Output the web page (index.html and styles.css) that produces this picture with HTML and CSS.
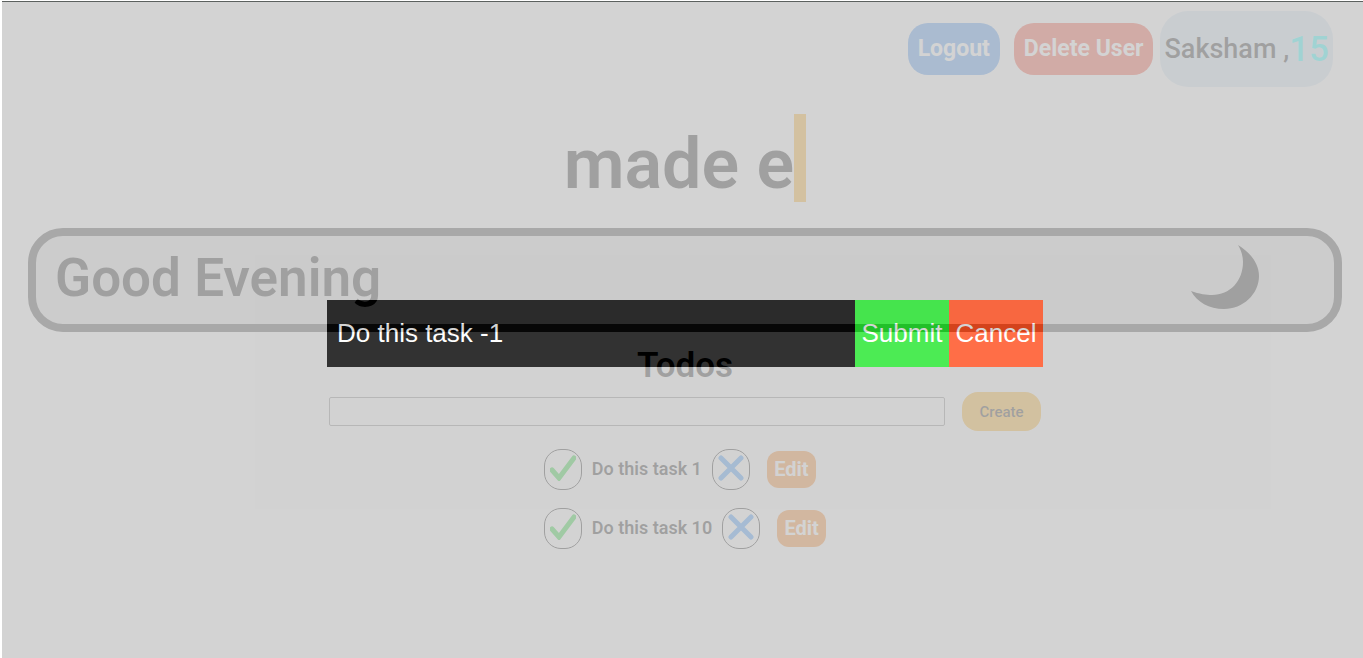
FILE: index.html
```
<!DOCTYPE html>
<html lang="en">
<head>
<meta charset="utf-8">
<title>Todos</title>
<link rel="stylesheet" href="styles.css">
</head>
<body>
<div class="app">
  <header class="topbar">
    <button class="btn logout" type="button">Logout</button>
    <button class="btn delete-user" type="button">Delete User</button>
    <div class="user">Saksham ,<span class="count">15</span></div>
  </header>
  <main>
    <div class="typing"><span class="typed">made e</span></div>
    <section class="greeting">
      <h1>Good Evening</h1>
      <svg class="moon" viewBox="0 0 70 66" aria-hidden="true"><path d="M48 0C61 8 69 19 69 31C69 49 53 64 34 64C19 64 7 57 1 46C9 49 17 50 22 50C40 50 53 36 53 17C53 11 51 5 48 0Z"/></svg>
    </section>
    <h2>Todos</h2>
    <form class="create-form">
      <input class="new-todo" type="text" aria-label="New todo">
      <button class="create" type="button">Create</button>
    </form>
    <ul class="todos">
      <li>
        <button class="icon-btn" type="button" aria-label="Complete"><svg class="check" viewBox="0 0 26 26"><path d="M2 15L9 23L24 3"/></svg></button>
        <span class="task">Do this task 1</span>
        <button class="icon-btn" type="button" aria-label="Remove"><svg class="cross" viewBox="0 0 26 26"><path d="M3 3L23 23M23 3L3 23"/></svg></button>
        <button class="edit" type="button">Edit</button>
      </li>
      <li>
        <button class="icon-btn" type="button" aria-label="Complete"><svg class="check" viewBox="0 0 26 26"><path d="M2 15L9 23L24 3"/></svg></button>
        <span class="task">Do this task 10</span>
        <button class="icon-btn" type="button" aria-label="Remove"><svg class="cross" viewBox="0 0 26 26"><path d="M3 3L23 23M23 3L3 23"/></svg></button>
        <button class="edit" type="button">Edit</button>
      </li>
    </ul>
  </main>
  <div class="overlay">
    <form class="edit-form">
      <input class="edit-input" type="text" aria-label="Edit todo" value="Do this task -1">
      <button class="submit" type="button">Submit</button>
      <button class="cancel" type="button">Cancel</button>
    </form>
  </div>
</div>
</body>
</html>
```
FILE: styles.css
```
* { box-sizing: border-box; }
body {
  margin: 0;
  padding: 1px 0 0 2px;
  background: #fff;
  color: #000;
  font-family: Roboto, "Liberation Sans", sans-serif;
  font-weight: 500;
}
button, input { margin: 0; border: 0; font: inherit; }
button { padding: 0; cursor: pointer; }
h1, h2, ul { margin: 0; padding: 0; font-weight: 600; }
.app {
  position: relative;
  min-height: calc(100vh - 1px);
  padding: 0 21px 0 26px;
  border-top: 1px solid #5c615f;
}
.topbar {
  display: flex;
  justify-content: flex-end;
  align-items: center;
  padding: 9px 9px 0 0;
}
.btn {
  height: 52px;
  padding: 0 10px 2px;
  border-radius: 20px;
  color: #fff;
  font-size: 23px;
  font-weight: 700;
}
.logout { margin-right: 14px; background: #3287f0; }
.delete-user { margin-right: 7px; background: #f5371e; }
.user {
  display: flex;
  align-items: center;
  height: 76px;
  padding: 0 4px;
  border-radius: 28px;
  background: #cde1f0;
  font-size: 27px;
}
.count { color: #00ffff; font-size: 35px; }
.typing { display: flex; justify-content: center; margin-top: 27px; }
.typed {
  padding-top: 12px;
  border-right: 12px solid orange;
  font-size: 70px;
  font-weight: 600;
  line-height: 76px;
}
.greeting {
  display: flex;
  justify-content: space-between;
  align-items: center;
  height: 104px;
  margin-top: 26px;
  padding: 0 74px 4px 19px;
  border: 8px solid #282828;
  border-radius: 35px;
  background: #dcdcdc;
}
h1 { font-size: 53px; line-height: 60px; }
.moon { width: 70px; height: 66px; }
h2 { margin-top: 12px; font-size: 35px; line-height: 44px; text-align: center; }
.create-form {
  display: flex;
  justify-content: center;
  align-items: center;
  gap: 17px;
  margin-top: 4px;
}
.new-todo {
  width: 616px;
  height: 29px;
  border: 1px solid #767676;
  border-radius: 2px;
  background: #fff;
}
.create {
  width: 79px;
  height: 39px;
  border-radius: 16px;
  background: orange;
  font-size: 15px;
}
.todos {
  display: flex;
  flex-direction: column;
  gap: 18px;
  width: fit-content;
  margin: 18px auto 0;
  list-style: none;
}
.todos li { display: flex; align-items: center; }
.icon-btn {
  display: flex;
  justify-content: center;
  width: 38px;
  height: 41px;
  padding-top: 5px;
  border: 1px solid #000;
  border-radius: 17px;
  background: #fff;
}
.icon-btn svg { width: 26px; height: 26px; fill: none; stroke-linecap: round; stroke-width: 5; }
.check { stroke: #00d214; }
.cross { stroke: #1e87ff; }
.task { margin: 0 10px; padding-bottom: 2px; font-size: 18px; }
.edit {
  width: 49px;
  height: 37px;
  margin-left: 17px;
  padding-bottom: 2px;
  border-radius: 12px;
  background: #fa7300;
  color: #fff;
  font-size: 20px;
  font-weight: 700;
}
.moon path { fill: #000; }
.overlay {
  position: absolute;
  inset: 0;
  padding: 298px 21px 0 26px;
  background: #c8c8c8;
  opacity: 0.8;
}
.edit-form {
  display: flex;
  width: 716px;
  max-width: 100%;
  height: 67px;
  margin: 0 auto;
  font: 400 26px "Liberation Sans", Arial, sans-serif;
  color: #fff;
}
.edit-form > * { color: #fff; }
.edit-input { flex: 1; min-width: 0; padding: 0 10px; background: #000; }
.submit { width: 94px; background: #20e72a; }
.cancel { width: 94px; background: #ff4a1a; }
```
